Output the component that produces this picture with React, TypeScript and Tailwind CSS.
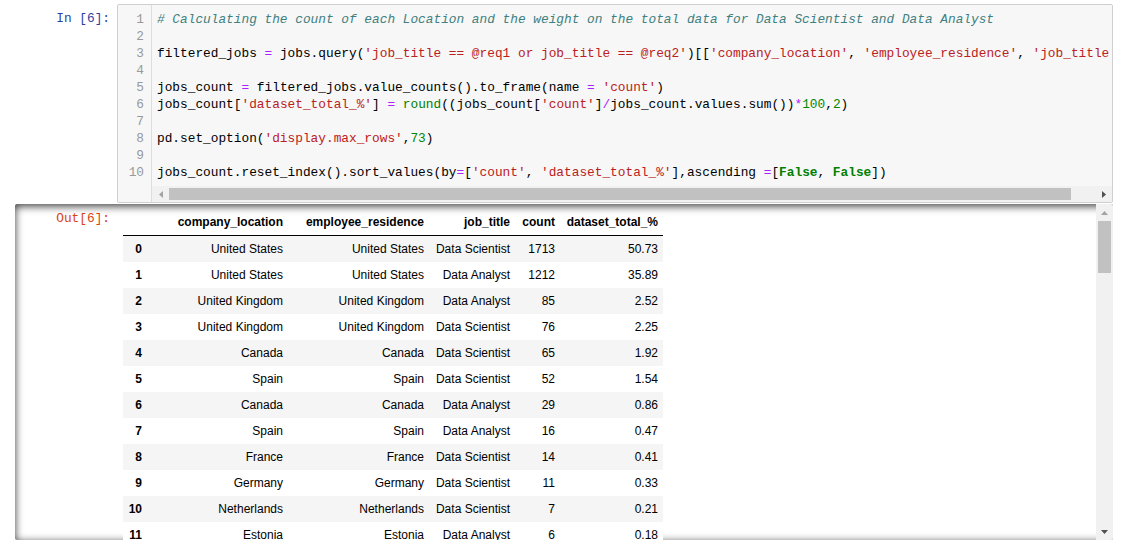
import React from 'react';

type Seg = [string, string?];

const C = {
  cm: 'text-[#408080] italic',
  op: 'text-[#aa22ff]',
  st: 'text-[#ba2121]',
  nu: 'text-[#008800]',
  kw: 'text-[#008000] font-bold',
  bi: 'text-[#008000]',
};

const code: Seg[][] = [
  [['# Calculating the count of each Location and the weight on the total data for Data Scientist and Data Analyst', C.cm]],
  [],
  [
    ['filtered_jobs '], ['=', C.op], [' jobs.query('],
    ["'job_title == @req1 or job_title == @req2'", C.st], [')[['],
    ["'company_location'", C.st], [', '], ["'employee_residence'", C.st], [', '],
    ["'job_title'", C.st], [', '], ["'salary_in_usd'", C.st], [']]'],
  ],
  [],
  [['jobs_count '], ['=', C.op], [' filtered_jobs.value_counts().to_frame(name '], ['=', C.op], [' '], ["'count'", C.st], [')']],
  [
    ['jobs_count['], ["'dataset_total_%'", C.st], ['] '], ['=', C.op], [' '], ['round', C.bi],
    ['((jobs_count['], ["'count'", C.st], [']'], ['/', C.op], ['jobs_count.values.sum())'],
    ['*', C.op], ['100', C.nu], [','], ['2', C.nu], [')'],
  ],
  [],
  [['pd.set_option('], ["'display.max_rows'", C.st], [','], ['73', C.nu], [')']],
  [],
  [
    ['jobs_count.reset_index().sort_values(by'], ['=', C.op], ['['], ["'count'", C.st], [', '],
    ["'dataset_total_%'", C.st], ['],ascending '], ['=', C.op], ['['], ['False', C.kw], [', '],
    ['False', C.kw], ['])'],
  ],
];

const rows: [string, string, string, string, number, string][] = [
  ['0', 'United States', 'United States', 'Data Scientist', 1713, '50.73'],
  ['1', 'United States', 'United States', 'Data Analyst', 1212, '35.89'],
  ['2', 'United Kingdom', 'United Kingdom', 'Data Analyst', 85, '2.52'],
  ['3', 'United Kingdom', 'United Kingdom', 'Data Scientist', 76, '2.25'],
  ['4', 'Canada', 'Canada', 'Data Scientist', 65, '1.92'],
  ['5', 'Spain', 'Spain', 'Data Scientist', 52, '1.54'],
  ['6', 'Canada', 'Canada', 'Data Analyst', 29, '0.86'],
  ['7', 'Spain', 'Spain', 'Data Analyst', 16, '0.47'],
  ['8', 'France', 'France', 'Data Scientist', 14, '0.41'],
  ['9', 'Germany', 'Germany', 'Data Scientist', 11, '0.33'],
  ['10', 'Netherlands', 'Netherlands', 'Data Scientist', 7, '0.21'],
  ['11', 'Estonia', 'Estonia', 'Data Analyst', 6, '0.18'],
];

const widths = ['w-[24px]', 'w-[141px]', 'w-[141px]', 'w-[86px]', 'w-[45px]', 'w-[103px]'];

const mono = "font-['Liberation_Mono',monospace] text-[12.8px]";

const Arrow = ({ dir, dark }: { dir: 'up' | 'down' | 'left' | 'right'; dark?: boolean }) => {
  const pts = {
    up: '0,4 7,4 3.5,0',
    down: '0,0 7,0 3.5,4',
    left: '4,0 4,7 0,3.5',
    right: '0,0 0,7 4,3.5',
  }[dir];
  const vert = dir === 'up' || dir === 'down';
  return (
    <svg width={vert ? 7 : 4} height={vert ? 4 : 7} viewBox={vert ? '0 0 7 4' : '0 0 4 7'}>
      <polygon points={pts} fill={dark ? '#505050' : '#a3a3a3'} />
    </svg>
  );
};

export default function App() {
  return (
    <div className="w-[1127px] h-[551px] bg-white overflow-hidden">
      {/* input cell */}
      <div className="flex pt-[4px]">
        <div className={`w-[117px] pr-[7px] pt-[6px] text-right leading-[17px] text-[#303f9f] ${mono}`}>In [6]:</div>
        <div className="w-[996px] h-[199px] border border-[#cfcfcf] rounded-[2px] bg-[#f7f7f7] flex overflow-hidden">
          <div className={`w-[34px] shrink-0 border-r border-[#dddddd] pt-[6px] text-right pr-[7px] leading-[17px] text-[#999999] ${mono}`}>
            {code.map((_, i) => (
              <div key={i} className="h-[17px]">{i + 1}</div>
            ))}
          </div>
          <div className="flex-1 min-w-0 flex flex-col">
            <div className={`pt-[6px] pb-[5px] pl-[5px] leading-[17px] text-black whitespace-pre overflow-hidden ${mono}`}>
              {code.map((line, i) => (
                <div key={i} className="h-[17px]">
                  {line.map((s, j) => (
                    <span key={j} className={s[1] ?? ''}>{s[0]}</span>
                  ))}
                </div>
              ))}
            </div>
            <div className="h-[16px] bg-[#f1f1f1] flex items-center">
              <div className="w-[17px] h-full flex items-center justify-center"><Arrow dir="left" /></div>
              <div className="flex-1 h-full py-[2px]">
                <div className="w-[902px] h-full bg-[#c1c1c1]" />
              </div>
              <div className="w-[17px] h-full flex items-center justify-center"><Arrow dir="right" dark /></div>
            </div>
          </div>
        </div>
      </div>

      {/* output area */}
      <div className="ml-[15px] mt-[1px] w-[1098px] h-[336px] flex rounded-[2px] shadow-[inset_0_2px_8px_rgba(0,0,0,0.8)] overflow-hidden">
        <div className="flex-1 flex overflow-hidden">
          <div className={`w-[102px] shrink-0 pr-[7px] pt-[6px] text-right leading-[17px] text-[#d84315] ${mono}`}>Out[6]:</div>
          <div className="ml-[6px] pt-[5px] font-['Liberation_Sans',Arial,sans-serif] text-[12px] text-black">
            <div className="flex h-[27px] items-center border-b border-black font-bold">
              {['', 'company_location', 'employee_residence', 'job_title', 'count', 'dataset_total_%'].map((h, i) => (
                <div key={i} className={`${widths[i]} text-right pr-[5px]`}>{h}</div>
              ))}
            </div>
            {rows.map((r, ri) => (
              <div key={ri} className={`flex h-[26px] items-center ${ri % 2 === 0 ? 'bg-[#f5f5f5]' : 'bg-white'}`}>
                {r.map((v, i) => (
                  <div key={i} className={`${widths[i]} text-right pr-[5px] ${i === 0 ? 'font-bold' : ''}`}>{v}</div>
                ))}
              </div>
            ))}
          </div>
        </div>
        <div className="w-[17px] h-full bg-[#f1f1f1] flex flex-col">
          <div className="h-[17px] flex items-center justify-center"><Arrow dir="up" /></div>
          <div className="flex-1 px-[2px]">
            <div className="h-[52px] bg-[#c1c1c1]" />
          </div>
          <div className="h-[17px] flex items-center justify-center"><Arrow dir="down" dark /></div>
        </div>
      </div>
    </div>
  );
}
